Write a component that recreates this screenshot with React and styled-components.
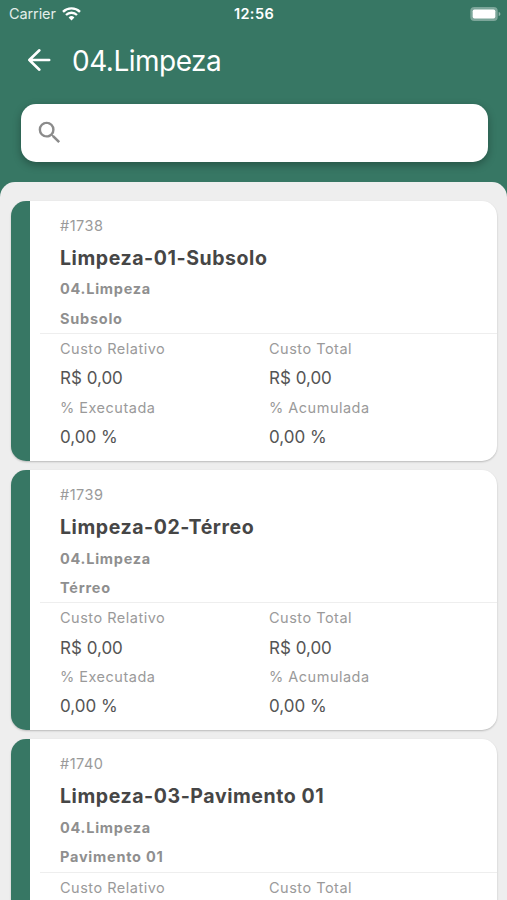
import styled, { createGlobalStyle } from 'styled-components'

const services = [
  { id: 1738, name: 'Limpeza-01-Subsolo', group: '04.Limpeza', place: 'Subsolo' },
  { id: 1739, name: 'Limpeza-02-Térreo', group: '04.Limpeza', place: 'Térreo' },
  { id: 1740, name: 'Limpeza-03-Pavimento 01', group: '04.Limpeza', place: 'Pavimento 01' },
]

const columns = [
  [
    { label: 'Custo Relativo', value: 'R$ 0,00' },
    { label: '% Executada', value: '0,00 %' },
  ],
  [
    { label: 'Custo Total', value: 'R$ 0,00' },
    { label: '% Acumulada', value: '0,00 %' },
  ],
]

const WifiIcon = () => (
  <svg width="19" height="14" viewBox="0 0 19 14" fill="none" stroke="#fff">
    <path d="M1 4.8a12.3 12.3 0 0 1 17 0" strokeWidth="2.4" />
    <path d="M4 8a7.9 7.9 0 0 1 11 0" strokeWidth="2.3" />
    <path d="M9.5 13.4L6.6 10.5a4.2 4.2 0 0 1 5.8 0z" fill="#fff" stroke="none" />
  </svg>
)

const BatteryIcon = () => (
  <svg width="31" height="14" viewBox="0 0 31 14">
    <rect x="0.3" y="0" width="27.4" height="14" rx="4" fill="#fff" fillOpacity="0.35" />
    <rect x="2.7" y="2.4" width="22.6" height="9.2" rx="1.8" fill="#fff" />
    <path d="M28.7 4.9c1.1.4 1.7 1.2 1.7 2.1s-.6 1.7-1.7 2.1z" fill="#fff" fillOpacity="0.45" />
  </svg>
)

const BackIcon = () => (
  <svg
    width="30"
    height="30"
    viewBox="0 0 30 30"
    fill="none"
    stroke="#fff"
    strokeWidth="2.6"
    strokeLinecap="round"
    strokeLinejoin="round"
  >
    <path d="M15.4 5.3L5.3 15l10.1 9.7M5.3 15h19.9" />
  </svg>
)

const SearchIcon = () => (
  <svg width="29.4" height="29.4" viewBox="0 0 24 24" fill="#8b8b8b">
    <path d="M15.5 14h-.79l-.28-.27A6.471 6.471 0 0 0 16 9.5 6.5 6.5 0 1 0 9.5 16c1.61 0 3.09-.59 4.23-1.57l.27.28v.79l5 4.99L20.49 19l-4.99-5zm-6 0C7.01 14 5 11.99 5 9.5S7.01 5 9.5 5 14 7.01 14 9.5 11.99 14 9.5 14z" />
  </svg>
)

const ServiceCard = ({ service }) => {
  const { id, name, group, place } = service

  return (
    <Card>
      <Summary>
        <Caption>#{id}</Caption>
        <Name>{name}</Name>
        <Caption $strong>{group}</Caption>
        <Caption $strong>{place}</Caption>
      </Summary>
      <Costs>
        {columns.map((items, index) => (
          <div key={index}>
            {items.map(({ label, value }) => (
              <div key={label}>
                <Caption>{label}</Caption>
                <Value>{value}</Value>
              </div>
            ))}
          </div>
        ))}
      </Costs>
    </Card>
  )
}

const App = () => {
  return (
    <Screen>
      <GlobalStyle />
      <StatusBar>
        <Carrier>
          Carrier
          <WifiIcon />
        </Carrier>
        <Clock>12:56</Clock>
        <Battery>
          <BatteryIcon />
        </Battery>
      </StatusBar>
      <Header>
        <IconButton aria-label="Voltar">
          <BackIcon />
        </IconButton>
        <Title>04.Limpeza</Title>
      </Header>
      <SearchBox>
        <SearchIcon />
        <SearchInput type="text" />
      </SearchBox>
      <List>
        {services.map((service) => (
          <ServiceCard key={service.id} service={service} />
        ))}
      </List>
    </Screen>
  )
}
export default App

const GlobalStyle = createGlobalStyle`
  * {
    box-sizing: border-box;
  }

  body {
    margin: 0;
    font-family: Inter, Roboto, sans-serif;
    background: #377764;
    overflow: hidden;
  }
`

const Screen = styled.div`
  display: flex;
  flex-direction: column;
  height: 900px;
  overflow: hidden;
  background: #377764;
`

const StatusBar = styled.div`
  display: grid;
  grid-template-columns: 1fr auto 1fr;
  align-items: center;
  height: 27px;
  flex-shrink: 0;
  padding: 0 6px 0 9px;
  color: #fff;
  font-size: 14.5px;
`

const Carrier = styled.div`
  display: flex;
  align-items: center;
  gap: 6px;
  color: #e3eeea;
  letter-spacing: -0.1px;
`

const Clock = styled.div`
  margin-right: 2px;
  font-weight: 600;
  letter-spacing: 0.4px;
`

const Battery = styled.div`
  display: flex;
  justify-content: flex-end;
`

const Header = styled.header`
  display: flex;
  align-items: center;
  height: 66px;
  flex-shrink: 0;
  padding-left: 24px;
  gap: 18px;
`

const IconButton = styled.button`
  display: flex;
  padding: 0;
  border: none;
  background: transparent;
`

const Title = styled.h1`
  margin: 0;
  padding-top: 1px;
  color: #fff;
  font-size: 28px;
  font-weight: 400;
  letter-spacing: -0.5px;
`

const SearchBox = styled.div`
  display: flex;
  align-items: center;
  height: 58.5px;
  flex-shrink: 0;
  margin: 10.5px 19.5px 0 20.5px;
  padding: 0 14.5px;
  border-radius: 15px;
  background: #fff;
  box-shadow: 0 3px 8px rgba(0, 0, 0, 0.3);
`

const SearchInput = styled.input`
  flex: 1;
  height: 100%;
  border: none;
  outline: none;
  background: transparent;
  font: inherit;
`

const List = styled.main`
  display: flex;
  flex-direction: column;
  flex: 1;
  gap: 9.2px;
  min-height: 0;
  margin-top: 19.5px;
  padding: 19.5px 10px 0 10.5px;
  border-radius: 15px 15px 0 0;
  background: #eeeeee;
  overflow: hidden;
`

const Card = styled.article`
  flex-shrink: 0;
  height: 260px;
  padding-top: 9.7px;
  border-left: 19.5px solid #377764;
  border-radius: 15px;
  background: #fff;
  box-shadow: 0 1px 2px rgba(0, 0, 0, 0.22);
`

const Summary = styled.div`
  margin-left: 10.5px;
  padding-left: 20px;
  border-bottom: 1px solid #eeeeee;
`

const Costs = styled.div`
  display: grid;
  grid-template-columns: 209px 1fr;
  padding-left: 30.5px;
`

const Caption = styled.div`
  height: 29.4px;
  line-height: 29.4px;
  color: ${({ $strong }) => ($strong ? '#8f8f8f' : '#9a9a9a')};
  font-size: 14.5px;
  font-weight: ${({ $strong }) => ($strong ? 650 : 400)};
  letter-spacing: ${({ $strong }) => ($strong ? '0.75px' : '0.5px')};
`

const Name = styled.h2`
  height: 34.4px;
  margin: 0;
  padding-top: 1px;
  line-height: 34.4px;
  color: #464646;
  font-size: 19.5px;
  font-weight: 650;
  letter-spacing: 0.57px;
`

const Value = styled.div`
  height: 29.4px;
  padding-top: 0.8px;
  line-height: 29.4px;
  color: #555;
  font-size: 17px;
  letter-spacing: 0;
`
